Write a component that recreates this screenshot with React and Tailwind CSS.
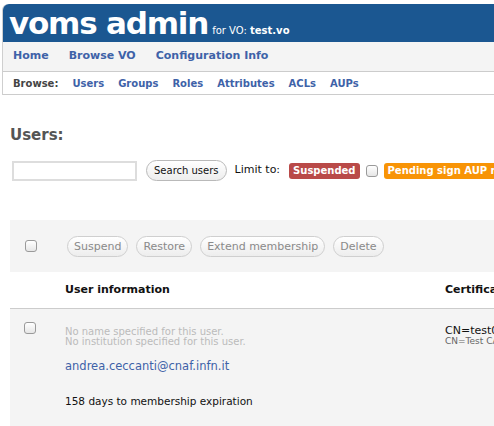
import React from "react";

const LINK = "text-[#3e62a8]";

const TOP_NAV = ["Home", "Browse VO", "Configuration Info"];
const BROWSE = ["Users", "Groups", "Roles", "Attributes", "ACLs", "AUPs"];
const ACTIONS = ["Suspend", "Restore", "Extend membership", "Delete"];

const Checkbox = () => (
  <span className="inline-block w-[12px] h-[12px] rounded-[3px] border border-[#9a9a9a] bg-gradient-to-b from-white to-[#e6e6e6] shrink-0" />
);

const PillButton = ({ children, muted }) => (
  <button
    className={
      "h-[21px] rounded-full border bg-gradient-to-b from-white to-[#ededed] leading-none whitespace-nowrap shrink-0 " +
      (muted
        ? "px-[6px] text-[#8a8a8a] border-[#cfcfcf] text-[11px]"
        : "px-[7px] text-[#111] border-[#b9b9b9] text-[10px]")
    }
  >
    {children}
  </button>
);

export default function App() {
  return (
    <div
      className="w-[494px] h-[426px] overflow-hidden bg-white"
      style={{ fontFamily: '"DejaVu Sans", Verdana, sans-serif' }}
    >
      <div className="w-[560px] pt-[4px] pl-[2px]">
        {/* header */}
        <div className="border-l border-[#cfcfcf] rounded-tl-[6px]">
          <div className="bg-[#1b5791] h-[38px] rounded-tl-[6px] flex items-end pl-[6px] pb-[3px]">
            <span className="text-white font-bold text-[31px] leading-[31px] tracking-[-1.2px]">
              voms admin
            </span>
            <span className="text-white text-[10px] ml-[4px] mb-[1px] whitespace-nowrap">
              for VO: <b>test.vo</b>
            </span>
          </div>
          <div className="bg-[#f4f4f4] h-[30px] border-b border-[#cccccc] flex items-center gap-[20px] pl-[10px]">
            {TOP_NAV.map((t) => (
              <a key={t} className={LINK + " font-bold text-[11px]"}>
                {t}
              </a>
            ))}
          </div>
          <div className="h-[23px] border-b border-[#cccccc] flex items-center gap-[14px] pl-[10px] text-[10px] font-bold">
            <span className="text-[#444]">Browse:</span>
            {BROWSE.map((t) => (
              <a key={t} className={LINK}>
                {t}
              </a>
            ))}
          </div>
        </div>

        <div className="pl-[8px]">
          <h2 className="text-[#555] font-bold text-[15px] mt-[30px] leading-[20px]">Users:</h2>

          <div className="flex items-center h-[21px] mt-[15px] ml-[2px] text-[11px] whitespace-nowrap">
            <input className="w-[125px] h-[20px] border-2 border-[#dddddd] bg-white shrink-0" />
            <span className="ml-[9px]">
              <PillButton>Search users</PillButton>
            </span>
            <span className="ml-[8px] text-[#111]">Limit to:</span>
            <span className="ml-[9px] bg-[#b94a48] text-white font-bold text-[10px] px-[4px] h-[16px] leading-[16px] rounded-[3px]">
              Suspended
            </span>
            <span className="ml-[6px] flex">
              <Checkbox />
            </span>
            <span className="ml-[6px] bg-[#f89406] text-white font-bold text-[10px] px-[4px] h-[16px] leading-[16px] rounded-[3px]">
              Pending sign AUP request
            </span>
          </div>

          {/* actions panel */}
          <div className="mt-[39px] bg-[#f4f4f4] h-[52px] flex items-center pl-[15px]">
            <Checkbox />
            <div className="flex items-center gap-[8px] ml-[30px]">
              {ACTIONS.map((a) => (
                <PillButton key={a} muted>
                  {a}
                </PillButton>
              ))}
            </div>
          </div>

          {/* table header */}
          <div className="h-[37px] border-b border-[#cccccc] flex items-center text-[11px] font-bold text-[#111] whitespace-nowrap">
            <span className="ml-[55px] w-[380px]">User information</span>
            <span>Certificates</span>
          </div>

          {/* user row */}
          <div className="bg-[#f4f4f4] h-[120px] flex pt-[6px] whitespace-nowrap">
            <div className="ml-[14px] w-[41px] pt-[2px]">
              <Checkbox />
            </div>
            <div className="w-[380px]">
              <div className="text-[#bbbbbb] text-[10px] leading-[10px] mt-[12px]">
                No name specified for this user.
              </div>
              <div className="text-[#bbbbbb] text-[10px] leading-[10px]">
                No institution specified for this user.
              </div>
              <a className={LINK + " block text-[11.5px] leading-[14px] mt-[12px]"}>
                andrea.ceccanti@cnaf.infn.it
              </a>
              <div className="text-[10.5px] leading-[14px] text-[#111] mt-[21px]">
                158 days to membership expiration
              </div>
            </div>
            <div className="mt-[10px]">
              <div className="text-[11px] leading-[12px] text-[#111]">CN=test0</div>
              <div className="text-[9px] leading-[9px] text-[#666]">CN=Test CA</div>
            </div>
          </div>
        </div>
      </div>
    </div>
  );
}
